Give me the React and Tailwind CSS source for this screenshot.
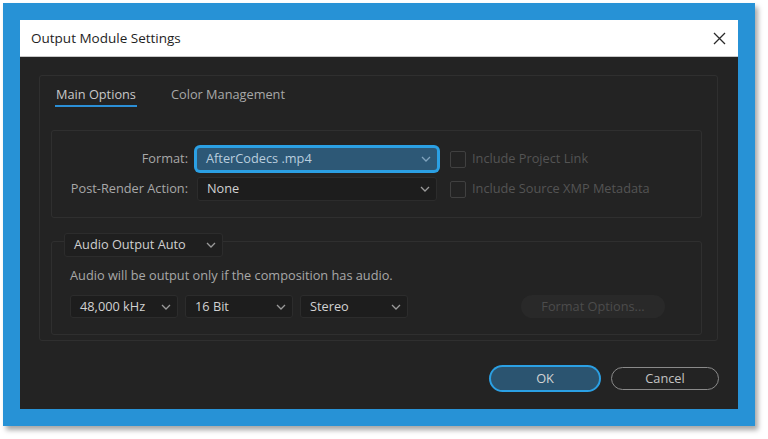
import React from 'react';

const Chevron = ({ className = '' }) => (
  <svg width="10" height="6" viewBox="0 0 10 6" className={className}>
    <polyline points="1,1 5,5 9,1" fill="none" stroke="currentColor" strokeWidth="1.3" />
  </svg>
);

const Select = ({ label, className = '', textClass = 'text-[#d2d2d2]', chevClass = 'text-[#9a9a9a]' }) => (
  <div className={`flex items-center justify-between rounded-[3px] pl-[9px] pr-[6px] ${className}`}>
    <span className={textClass}>{label}</span>
    <Chevron className={chevClass} />
  </div>
);

const Check = ({ label }) => (
  <div className="flex items-center gap-[6px]">
    <div className="w-[16px] h-[17px] rounded-[2px] border-[1.5px] border-[#404040]"></div>
    <span className="text-[#545454]">{label}</span>
  </div>
);

export default function App() {
  return (
    <div
      className="w-[768px] h-[439px] bg-white pt-[3px] pl-[3px] text-[12.75px]"
      style={{ fontFamily: '"Open Sans", "Noto Sans", sans-serif' }}
    >
      <div className="w-[752px] h-[423px] bg-[#2792d6] p-[17px] shadow-[3px_4px_5px_rgba(0,0,0,0.35)]">
        {/* title bar */}
        <div className="h-[37px] bg-white border-b border-[#c8c8c8] flex items-center justify-between pl-[11px] pr-[12px]">
          <span className="text-[13.5px] text-[#1e1e1e] pt-[1px]">Output Module Settings</span>
          <svg width="13" height="13" viewBox="0 0 13 13">
            <path d="M1 1 L12 12 M12 1 L1 12" stroke="#2a2a2a" strokeWidth="1.3" />
          </svg>
        </div>

        {/* body */}
        <div className="h-[352px] bg-[#232323] pt-[18px] pl-[19px] pr-[20px] flex flex-col">
          <div className="h-[266px] border border-[#2f2f2f] rounded-[3px] pl-[11px] pr-[15px]">
            {/* tabs */}
            <div className="flex gap-[34px] pl-[5px] pt-[8px] h-[54px]">
              <div className="flex flex-col">
                <span className="text-[#c9c9c9] leading-[20px]">Main Options</span>
                <div className="h-[2px] bg-[#2b8fd6] mt-[1px] w-[82px] -ml-[1px]"></div>
              </div>
              <span className="text-[#a8a8a8] leading-[20px]">Color Management</span>
            </div>

            {/* output group */}
            <div className="h-[88px] border border-[#2f2f2f] rounded-[3px] pt-[17px] flex flex-col gap-[7px]">
              <div className="flex items-center">
                <span className="w-[136px] text-right text-[#a8a8a8]">Format:</span>
                <Select
                  label="AfterCodecs .mp4"
                  className="ml-[9px] w-[240px] h-[22px] bg-[#2d5876] ring-[3px] ring-[#2ba0e4]"
                  textClass="text-[#b9cede]"
                  chevClass="text-[#7fa3bd]"
                />
                <div className="ml-[13px]">
                  <Check label="Include Project Link" />
                </div>
              </div>
              <div className="flex items-center">
                <span className="w-[136px] text-right text-[#a8a8a8]">Post-Render Action:</span>
                <Select
                  label="None"
                  className="ml-[9px] w-[240px] h-[24px] bg-[#1d1d1d] border border-[#2c2c2c]"
                />
                <div className="ml-[13px]">
                  <Check label="Include Source XMP Metadata" />
                </div>
              </div>
            </div>

            {/* audio group */}
            <div className="relative mt-[23px] h-[94px] border border-[#2f2f2f] rounded-[3px] pt-[23px] pl-[18px] pr-[36px]">
              <div className="absolute -top-[9px] left-[12px] bg-[#232323]">
                <Select
                  label="Audio Output Auto"
                  className="w-[159px] h-[24px] bg-[#1f1f1f] border border-[#2c2c2c]"
                  textClass="text-[#d0d0d0]"
                />
              </div>
              <div className="text-[#a8a8a8] leading-[20px]">
                Audio will be output only if the composition has audio.
              </div>
              <div className="flex items-center mt-[10px]">
                <Select label="48,000 kHz" className="w-[108px] h-[23px] bg-[#1d1d1d] border border-[#2c2c2c]" />
                <Select label="16 Bit" className="ml-[7px] w-[108px] h-[23px] bg-[#1d1d1d] border border-[#2c2c2c]" />
                <Select label="Stereo" className="ml-[7px] w-[108px] h-[23px] bg-[#1d1d1d] border border-[#2c2c2c]" />
                <div className="ml-auto w-[144px] h-[23px] rounded-full bg-[#292929] flex items-center justify-center text-[#4c4c4c]">
                  Format Options...
                </div>
              </div>
            </div>
          </div>

          {/* buttons */}
          <div className="flex justify-end items-center gap-[12px] mt-auto mb-[19px] mr-[-1px]">
            <div className="w-[108px] h-[23px] rounded-full bg-[#2b5470] ring-2 ring-[#2ba0e4] flex items-center justify-center text-[#d4d4d4]">
              OK
            </div>
            <div className="w-[108px] h-[23px] rounded-full border border-[#8a8a8a] flex items-center justify-center text-[#c4c4c4]">
              Cancel
            </div>
          </div>
        </div>
      </div>
    </div>
  );
}
